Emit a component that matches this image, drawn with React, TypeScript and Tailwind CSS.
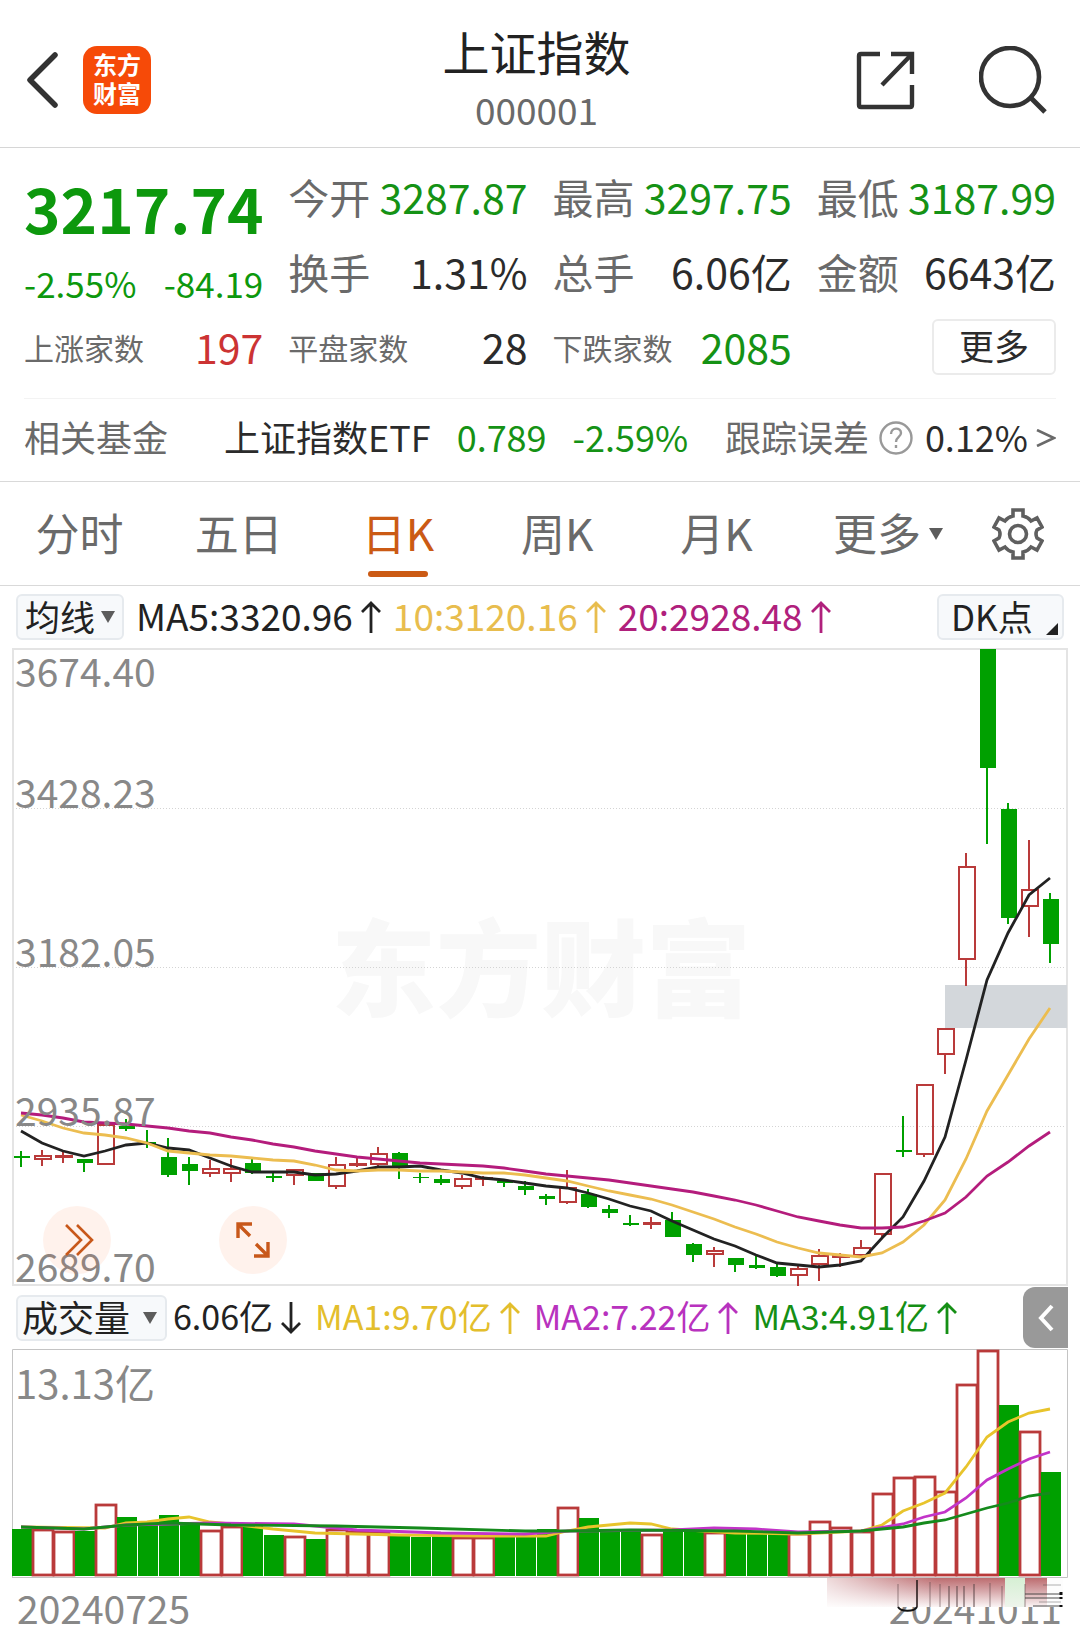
import type { ReactNode } from 'react';

type Candle = [color: 'r' | 'g', top: number, bottom: number, high: number, low: number];
type Point = [index: number, y: number];

// Both charts share one coordinate sheet, 21 units per trading day
const STEP = 21;
const RED = '#b93a3a';
const GREEN = '#00a000';

const candles: Candle[] = [
    ['g', 1156, 1158, 1151, 1167],
    ['r', 1155, 1160, 1150, 1166],
    ['r', 1155, 1158, 1151, 1163],
    ['g', 1159, 1163, 1159, 1172],
    ['r', 1124, 1165, 1124, 1165],
    ['g', 1126, 1129, 1119, 1131],
    ['g', 1142, 1144, 1130, 1148],
    ['g', 1157, 1175, 1138, 1177],
    ['g', 1164, 1171, 1157, 1185],
    ['r', 1168, 1174, 1160, 1177],
    ['r', 1168, 1174, 1159, 1182],
    ['g', 1163, 1173, 1159, 1174],
    ['g', 1176, 1178, 1171, 1182],
    ['r', 1169, 1176, 1169, 1185],
    ['g', 1173, 1181, 1173, 1181],
    ['r', 1164, 1187, 1157, 1189],
    ['r', 1163, 1165, 1158, 1167],
    ['r', 1153, 1165, 1147, 1166],
    ['g', 1153, 1167, 1152, 1179],
    ['g', 1177, 1178, 1173, 1183],
    ['g', 1179, 1183, 1175, 1185],
    ['r', 1178, 1187, 1175, 1189],
    ['r', 1177, 1179, 1176, 1186],
    ['g', 1181, 1183, 1181, 1187],
    ['g', 1186, 1190, 1181, 1195],
    ['g', 1196, 1199, 1194, 1205],
    ['r', 1187, 1203, 1170, 1204],
    ['g', 1194, 1207, 1189, 1208],
    ['g', 1209, 1213, 1205, 1218],
    ['g', 1223, 1225, 1215, 1226],
    ['r', 1222, 1225, 1217, 1229],
    ['g', 1220, 1237, 1212, 1237],
    ['g', 1244, 1255, 1243, 1262],
    ['r', 1250, 1255, 1247, 1267],
    ['g', 1258, 1265, 1258, 1272],
    ['g', 1265, 1268, 1255, 1269],
    ['g', 1267, 1276, 1262, 1277],
    ['r', 1268, 1276, 1265, 1286],
    ['r', 1255, 1265, 1249, 1281],
    ['r', 1255, 1258, 1253, 1267],
    ['r', 1247, 1256, 1240, 1256],
    ['r', 1173, 1235, 1173, 1239],
    ['g', 1150, 1152, 1116, 1157],
    ['r', 1084, 1155, 1084, 1157],
    ['r', 1028, 1055, 1028, 1074],
    ['r', 866, 960, 853, 986],
    ['g', 649, 768, 649, 844],
    ['g', 809, 918, 803, 924],
    ['r', 889, 907, 840, 937],
    ['g', 899, 944, 893, 963],
];

const ma5 = [
    1131, 1143, 1151, 1156, 1151, 1145, 1143, 1148, 1150, 1158, 1166, 1172, 1172, 1172, 1175, 1174, 1171,
    1167, 1167, 1166, 1170, 1173, 1178, 1180, 1183, 1186, 1188, 1193, 1199, 1206, 1211, 1221, 1230, 1239,
    1246, 1255, 1263, 1265, 1267, 1265, 1261, 1238, 1217, 1181, 1137, 1060, 980, 933, 895, 878,
];
const ma10 = [
    1115, 1121, 1128, 1133, 1135, 1138, 1143, 1151, 1153, 1155, 1156, 1158, 1160, 1161, 1165, 1170, 1171,
    1170, 1170, 1171, 1171, 1172, 1173, 1173, 1175, 1178, 1181, 1186, 1191, 1195, 1199, 1205, 1212, 1219,
    1227, 1234, 1242, 1248, 1253, 1255, 1257, 1253, 1242, 1225, 1200, 1159, 1111, 1075, 1039, 1008,
];
const ma20 = [
    1113, 1115, 1118, 1122, 1123, 1124, 1126, 1128, 1131, 1133, 1137, 1140, 1144, 1147, 1151, 1154, 1157,
    1159, 1161, 1163, 1164, 1165, 1166, 1168, 1171, 1174, 1176, 1178, 1180, 1183, 1186, 1189, 1192, 1196,
    1200, 1205, 1211, 1217, 1221, 1225, 1228, 1228, 1227, 1221, 1213, 1197, 1176, 1162, 1146, 1132,
];

const volumeTops = [
    1529, 1529, 1531, 1531, 1504, 1517, 1524, 1515, 1525, 1530, 1526, 1526, 1535, 1536, 1539, 1529, 1531,
    1532, 1534, 1537, 1535, 1537, 1537, 1537, 1537, 1529, 1507, 1518, 1530, 1530, 1534, 1530, 1532, 1532,
    1533, 1534, 1534, 1533, 1521, 1527, 1531, 1493, 1477, 1476, 1491, 1384, 1350, 1405, 1431, 1472,
];
// Days that closed above the previous close but below their own open
const risingVolume = [42, 46];

const volumeLines: { color: string; points: Point[] }[] = [
    {
        color: '#e8c42c',
        points: [[0, 1527], [4, 1528], [5, 1523], [6, 1522], [7, 1519], [8, 1517], [9, 1522], [10, 1524], [12, 1529], [14, 1533], [18, 1535], [22, 1536], [25, 1536], [26, 1531], [27, 1527], [29, 1523], [30, 1524], [31, 1529], [34, 1533], [37, 1534], [40, 1531], [41, 1525], [42, 1511], [43, 1503], [44, 1493], [45, 1467], [46, 1437], [47, 1422], [48, 1413], [49, 1409]],
    },
    {
        color: '#c234c8',
        points: [[0, 1527], [3, 1529], [5, 1525], [9, 1523], [13, 1524], [16, 1530], [20, 1533], [24, 1534], [26, 1531], [31, 1530], [33, 1528], [35, 1529], [37, 1532], [40, 1531], [42, 1524], [43, 1517], [44, 1512], [45, 1498], [46, 1480], [47, 1469], [48, 1459], [49, 1452]],
    },
    {
        color: '#158a1c',
        points: [[0, 1527], [3, 1529], [5, 1525], [7, 1523], [10, 1525], [15, 1526], [19, 1528], [24, 1531], [26, 1531], [29, 1530], [34, 1531], [37, 1533], [40, 1531], [42, 1527], [43, 1523], [44, 1520], [45, 1514], [46, 1508], [47, 1503], [48, 1496], [49, 1493]],
    },
];

const tabs = ['分时', '五日', '日K', '周K', '月K'];

const toPoints = (points: Point[]) => points.map(([i, y]) => `${21 + STEP * i},${y}`).join(' ');

function Stat({ label, value, color = 'text-[#2b2b2b]', small = false }: { label: string; value: string; color?: string; small?: boolean }) {
    return (
        <div className="flex items-center justify-between whitespace-nowrap">
            <span className={small ? 'text-[30px] leading-none text-[#6a6a6a]' : 'text-[41px] leading-none text-[#6a6a6a]'}>{label}</span>
            <span className={`text-[41px] leading-none ${color}`}>{value}</span>
        </div>
    );
}

function Arrow({ down = false }: { down?: boolean }) {
    return (
        <svg viewBox="0 0 20 32" className="h-8 w-5 shrink-0" fill="none" stroke="currentColor" strokeWidth="2.8">
            {down ? <path d="M10 0v30M1 21l9 9 9-9" /> : <path d="M10 32V2M1 11l9-9 9 9" />}
        </svg>
    );
}

function Caret() {
    return (
        <svg viewBox="0 0 14 12" className="h-3 w-3.5 shrink-0" fill="#5c5c5c">
            <path d="M0 0h14L7 12z" />
        </svg>
    );
}

function Reading({ color, down, children }: { color: string; down?: boolean; children: ReactNode }) {
    return (
        <span className={`flex items-center gap-2 whitespace-nowrap ${color}`}>
            <span className="pb-1 leading-none">{children}</span>
            <Arrow down={down} />
        </span>
    );
}

function PriceChart() {
    return (
        <div className="relative mx-3">
            <svg viewBox="12 648 1056 638" className="block w-full overflow-visible" fill="none">
                <text x="541" y="1008" textAnchor="middle" fontSize="105" fontWeight="900" fill="#f8f8f8">东方财富</text>
                {[808, 967, 1126].map((y) => (
                    <path key={y} d={`M13 ${y}.5H1067`} stroke="#d4d4d4" strokeDasharray="1 2" />
                ))}
                <rect x="13" y="649" width="1054" height="636" stroke="#e4e4e4" strokeWidth="2" />
                <rect x="945" y="985" width="122" height="43" fill="#d3d7db" />
                {candles.map(([color, top, bottom, high, low], i) => {
                    const x = 21 + STEP * i;
                    if (color === 'g') {
                        return (
                            <g key={i} fill={GREEN}>
                                <rect x={x - 1} y={high} width="2" height={low - high} />
                                <rect x={x - 7} y={top} width="16" height={bottom - top} />
                            </g>
                        );
                    }
                    return (
                        <g key={i} stroke={RED} strokeWidth="2">
                            <path d={`M${x} ${high}V${top}M${x} ${bottom}V${low}`} />
                            <rect x={x - 7} y={top + 1} width="16" height={Math.max(bottom - top - 2, 1)} />
                        </g>
                    );
                })}
                <polyline points={toPoints(ma5.map((y, i) => [i, y]))} stroke="#222222" strokeWidth="2.8" />
                <polyline points={toPoints(ma10.map((y, i) => [i, y]))} stroke="#ecbd50" strokeWidth="2.8" />
                <polyline points={toPoints(ma20.map((y, i) => [i, y]))} stroke="#b41c7c" strokeWidth="2.8" />
                <g fontSize="39" fill="#888888">
                    <text x="15" y="687">3674.40</text>
                    <text x="15" y="808">3428.23</text>
                    <text x="15" y="967">3182.05</text>
                    <text x="15" y="1126">2935.87</text>
                    <text x="15" y="1282">2689.70</text>
                </g>
            </svg>
            <button type="button" aria-label="展开" className="absolute bottom-3 left-[31px] h-17 w-17 rounded-full bg-[#ff5a14]/8">
                <svg viewBox="0 0 68 68" className="h-full w-full" fill="none" stroke="#c8581a" strokeWidth="2.6">
                    <path d="M23 19l15 15-15 15M34 19l15 15-15 15" />
                </svg>
            </button>
            <button type="button" aria-label="全屏" className="absolute bottom-3 left-[207px] h-17 w-17 rounded-full bg-[#ff5a14]/8">
                <svg viewBox="0 0 68 68" className="h-full w-full" fill="none" stroke="#c8581a" strokeWidth="3.4">
                    <path d="M19 32V18h14M19 18l12 12M49 36v14H35M49 50L37 38" />
                </svg>
            </button>
        </div>
    );
}

function VolumeChart() {
    return (
        <div className="mx-3">
            <svg viewBox="12 1349 1056 229" className="block w-full" fill="none">
                <path d="M12.5 1578V1349.5H1067.5V1577.5H12.5" stroke="#c4c4c4" />
                {volumeTops.map((top, i) =>
                    candles[i][0] === 'g' && !risingVolume.includes(i) ? (
                        <rect key={i} x={12 + STEP * i} y={top} width="20" height={1576 - top} fill={GREEN} />
                    ) : (
                        <rect key={i} x={12 + STEP * i} y={top + 1} width="20" height={1574 - top} stroke={RED} strokeWidth="2.8" />
                    ),
                )}
                {volumeLines.map((line) => (
                    <polyline key={line.color} points={toPoints(line.points)} stroke={line.color} strokeWidth="2.8" />
                ))}
                <text x="15" y="1399" fontSize="40" fill="#888888">13.13亿</text>
            </svg>
        </div>
    );
}

// Streaked smudge hanging from the volume bars over the end date
function Smudge() {
    return (
        <svg viewBox="0 0 236 34" className="absolute top-0 right-[17px] h-[34px] w-[236px]" fill="none">
            <defs>
                <linearGradient id="smudge" x1="0" y1="0" x2="0" y2="1">
                    <stop offset="0" stopColor="#bd6c6f" />
                    <stop offset="0.4" stopColor="#d3a0a3" />
                    <stop offset="1" stopColor="#fbf5f5" />
                </linearGradient>
                <linearGradient id="smudge-edge" x1="0" y1="0" x2="1" y2="0">
                    <stop offset="0" stopColor="#ffffff" stopOpacity="0.75" />
                    <stop offset="1" stopColor="#ffffff" stopOpacity="0" />
                </linearGradient>
                <linearGradient id="smudge-mint" x1="0" y1="0" x2="0" y2="1">
                    <stop offset="0" stopColor="#d6f0d4" />
                    <stop offset="1" stopColor="#eef4ec" />
                </linearGradient>
            </defs>
            <rect width="236" height="29" fill="#fdfdfd" />
            <rect width="220" height="29" fill="url(#smudge)" />
            <rect width="110" height="29" fill="url(#smudge-edge)" />
            <rect x="178" width="20" height="29" fill="url(#smudge-mint)" />
            <g stroke="#5c4648" strokeWidth="2">
                <path d="M71 6v23M103 4v25M113 6v23M163 5v24M175 8v21M198 6v23" strokeOpacity="0.3" />
                <path d="M122 8v21M130 8v21M137 8v21M147 6v23" strokeOpacity="0.5" />
            </g>
            <path d="M90 2v27" stroke="#2a1d1d" strokeOpacity="0.8" strokeWidth="2" />
            <path d="M71 29c3 5 16 5 19 0" stroke="#111111" strokeWidth="2" />
            <path d="M198 16h36M198 20h36M206 28h28" stroke="#3a3a3a" strokeOpacity="0.45" strokeWidth="2" />
            <path d="M216 7h18M212 24h22" stroke="#3a3a3a" strokeOpacity="0.2" strokeWidth="2" />
            <path d="M234 14v3M234 19v2M234 27v2" stroke="#111111" strokeWidth="3" />
        </svg>
    );
}

export default function App() {
    return (
        <main className="w-full bg-white font-['Noto_Sans_CJK_SC',sans-serif] text-[#2b2b2b]">
            <header className="flex h-[148px] items-center border-b border-[#d6d6d6] pr-[33px] pl-[26px]">
                <div className="flex flex-1 items-center gap-6 pt-3">
                    <button type="button" aria-label="返回">
                        <svg viewBox="0 0 33 56" className="h-14 w-[33px]" fill="none" stroke="#333333" strokeWidth="5.5" strokeLinecap="round" strokeLinejoin="round">
                            <path d="M29 3L4 28l25 25" />
                        </svg>
                    </button>
                    <div className="h-[68px] w-[68px] rounded-[14px] bg-[#f64a08] pt-[3px] text-center text-[24px] leading-[29px] font-bold text-white">
                        东方
                        <br />
                        财富
                    </div>
                </div>
                <div className="flex flex-col items-center pt-3">
                    <h1 className="text-[47px] leading-[58px] text-[#222222]">上证指数</h1>
                    <p className="text-[37px] leading-[58px] text-[#6a6a6a]">000001</p>
                </div>
                <div className="flex flex-1 items-center justify-end gap-16 pt-3">
                    <button type="button" aria-label="分享">
                        <svg viewBox="0 0 60 60" className="h-15 w-15" fill="none" stroke="#333333" strokeWidth="4.4">
                            <path d="M25 4H6q-2 0-2 2v49q0 2 2 2h49q2 0 2-2V35M36 4h21v20M57 4L27 35" />
                        </svg>
                    </button>
                    <button type="button" aria-label="搜索">
                        <svg viewBox="0 0 68 68" className="h-17 w-17" fill="none" stroke="#333333" strokeWidth="4.6">
                            <circle cx="31" cy="31" r="29" />
                            <path d="M51 51l15 15" strokeWidth="5" />
                        </svg>
                    </button>
                </div>
            </header>

            <section className="px-6">
                <div className="grid auto-rows-[75px] grid-cols-4 gap-x-[25px] border-b border-[#f3f3f3] pt-[11px] pb-[14px]">
                    <div className="row-span-2 text-[#0d980d]">
                        <div className="flex h-24 items-center text-[62px] leading-none font-bold">3217.74</div>
                        <div className="flex h-[54px] items-center justify-between text-[35px] leading-none whitespace-nowrap">
                            <span>-2.55%</span>
                            <span>-84.19</span>
                        </div>
                    </div>
                    <Stat label="今开" value="3287.87" color="text-[#159215]" />
                    <Stat label="最高" value="3297.75" color="text-[#159215]" />
                    <Stat label="最低" value="3187.99" color="text-[#159215]" />
                    <Stat label="换手" value="1.31%" />
                    <Stat label="总手" value="6.06亿" />
                    <Stat label="金额" value="6643亿" />
                    <Stat label="上涨家数" value="197" color="text-[#cc3333]" small />
                    <Stat label="平盘家数" value="28" small />
                    <Stat label="下跌家数" value="2085" color="text-[#159215]" small />
                    <div className="flex items-center justify-end">
                        <button type="button" className="h-14 w-[124px] rounded-md border-2 border-[#ebebeb] pb-1 text-[35px] leading-none">更多</button>
                    </div>
                </div>
                <div className="flex h-[82px] items-center pb-2 text-[36px] leading-none whitespace-nowrap">
                    <span className="text-[#6a6a6a]">相关基金</span>
                    <a href="#etf" className="ml-14 flex gap-[26px]">
                        <span>上证指数ETF</span>
                        <span className="text-[#159215]">0.789</span>
                        <span className="text-[#159215]">-2.59%</span>
                    </a>
                    <span className="ml-auto text-[#6a6a6a]">跟踪误差</span>
                    <button type="button" aria-label="说明" className="mt-1 ml-2.5">
                        <svg viewBox="0 0 34 34" className="h-[34px] w-[34px]" fill="none" stroke="#999999" strokeWidth="2.4">
                            <circle cx="17" cy="17" r="15.5" />
                            <path d="M12 13c0-7 10-7 10-1 0 4-5 4-5 9M17 24v3" />
                        </svg>
                    </button>
                    <span className="ml-3">0.12%</span>
                    <svg viewBox="0 0 20 18" className="mt-1 ml-2 h-[18px] w-5" fill="none" stroke="#6a6a6a" strokeWidth="2.6">
                        <path d="M1 1l17 8-17 8" />
                    </svg>
                </div>
            </section>

            <nav className="flex h-[105px] border-y border-[#d9d9d9] text-[44px] leading-none whitespace-nowrap text-[#6a6a6a]">
                {tabs.map((tab) => (
                    <button key={tab} type="button" className={tab === '日K' ? 'relative flex-1 pb-1 text-[#cb5a14]' : 'flex-1 pb-1'}>
                        {tab}
                        {tab === '日K' && <span className="absolute bottom-2 left-1/2 h-1.5 w-15 -translate-x-1/2 rounded-full bg-[#cb5a14]" />}
                    </button>
                ))}
                <button type="button" className="flex w-[184px] items-center justify-center gap-2">
                    <span className="pb-1">更多</span>
                    <Caret />
                </button>
                <button type="button" aria-label="设置" className="w-[100px] pl-3">
                    <svg viewBox="0 0 52 52" className="h-[52px] w-[52px]" fill="none" stroke="#5f5f5f" strokeWidth="3.6">
                        <path d="M21 2h10v6q5 1 8 5l6-3 5 9-5 3q-2 4 0 8l5 3-5 9-6-3q-3 4-8 5v6H21v-6q-5-1-8-5l-6 3-5-9 5-3q2-4 0-8l-5-3 5-9 6 3q3-4 8-5z" />
                        <circle cx="26" cy="26" r="8.5" />
                    </svg>
                </button>
            </nav>

            <div className="flex h-[62px] items-center gap-3 px-4 text-[37px]">
                <button type="button" className="flex h-[46px] w-[108px] shrink-0 items-center justify-center gap-1.5 rounded-md border-2 border-[#e6eaee] bg-[#f7f9fb] text-[35px] leading-none text-[#222222]">
                    <span className="pb-1">均线</span>
                    <Caret />
                </button>
                <Reading color="text-[#222222]">MA5:3320.96</Reading>
                <Reading color="text-[#e8bd4e]">10:3120.16</Reading>
                <Reading color="text-[#b0207c]">20:2928.48</Reading>
                <button type="button" className="ml-auto flex h-[46px] w-[127px] shrink-0 items-center justify-between rounded-md border-2 border-[#e6eaee] bg-[#f7f9fb] pr-1 pl-3 text-[35px] leading-none whitespace-nowrap text-[#222222]">
                    <span className="pb-1">DK点</span>
                    <svg viewBox="0 0 12 12" className="mt-6 h-3 w-3" fill="#222222">
                        <path d="M12 0v12H0z" />
                    </svg>
                </button>
            </div>

            <PriceChart />

            <div className="flex h-[63px] items-center gap-3.5 pr-3 pl-4 text-[34px]">
                <button type="button" className="-mr-2 flex h-[46px] w-[151px] shrink-0 items-center justify-between rounded-md border-2 border-[#e6eaee] bg-[#f7f9fb] pr-2 pl-1 text-[36px] leading-none text-[#222222]">
                    <span className="pb-1">成交量</span>
                    <Caret />
                </button>
                <Reading color="text-[#222222]" down>6.06亿</Reading>
                <Reading color="text-[#e3be2c]">MA1:9.70亿</Reading>
                <Reading color="text-[#b832be]">MA2:7.22亿</Reading>
                <Reading color="text-[#158f15]">MA3:4.91亿</Reading>
                <button type="button" aria-label="收起" className="ml-auto flex h-[61px] w-[45px] items-center justify-center rounded-l-xl bg-[#999999]">
                    <svg viewBox="0 0 16 28" className="h-7 w-4" fill="none" stroke="#ffffff" strokeWidth="4">
                        <path d="M14 2L3 14l11 12" />
                    </svg>
                </button>
            </div>

            <VolumeChart />

            <footer className="relative flex h-[55px] items-center justify-between pt-1 pr-[18px] pl-[17px] text-[39px] leading-none text-[#888888]">
                <time dateTime="2024-07-25">20240725</time>
                <time dateTime="2024-10-11">20241011</time>
                <Smudge />
            </footer>
        </main>
    );
}
